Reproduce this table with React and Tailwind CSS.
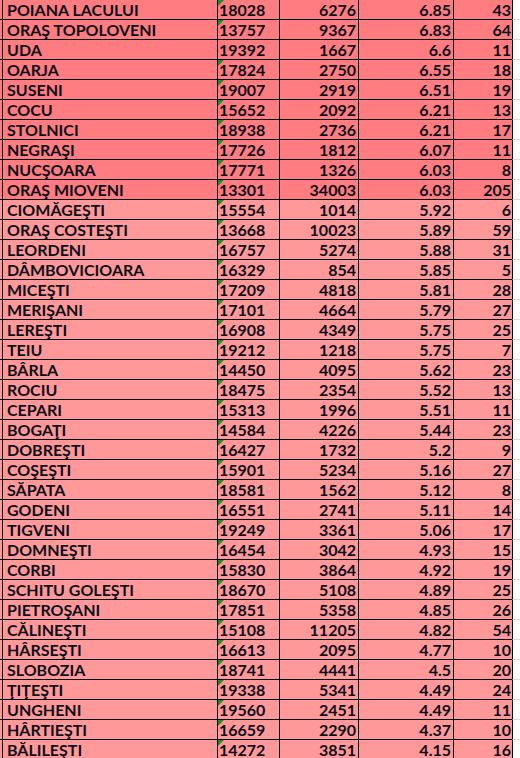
const rows = [
  ["POIANA LACULUI", "18028", "6276", "6.85", "43"],
  ["ORAŞ TOPOLOVENI", "13757", "9367", "6.83", "64"],
  ["UDA", "19392", "1667", "6.6", "11"],
  ["OARJA", "17824", "2750", "6.55", "18"],
  ["SUSENI", "19007", "2919", "6.51", "19"],
  ["COCU", "15652", "2092", "6.21", "13"],
  ["STOLNICI", "18938", "2736", "6.21", "17"],
  ["NEGRAŞI", "17726", "1812", "6.07", "11"],
  ["NUCŞOARA", "17771", "1326", "6.03", "8"],
  ["ORAŞ MIOVENI", "13301", "34003", "6.03", "205"],
  ["CIOMĂGEŞTI", "15554", "1014", "5.92", "6"],
  ["ORAŞ COSTEŞTI", "13668", "10023", "5.89", "59"],
  ["LEORDENI", "16757", "5274", "5.88", "31"],
  ["DÂMBOVICIOARA", "16329", "854", "5.85", "5"],
  ["MICEŞTI", "17209", "4818", "5.81", "28"],
  ["MERIŞANI", "17101", "4664", "5.79", "27"],
  ["LEREŞTI", "16908", "4349", "5.75", "25"],
  ["TEIU", "19212", "1218", "5.75", "7"],
  ["BÂRLA", "14450", "4095", "5.62", "23"],
  ["ROCIU", "18475", "2354", "5.52", "13"],
  ["CEPARI", "15313", "1996", "5.51", "11"],
  ["BOGAŢI", "14584", "4226", "5.44", "23"],
  ["DOBREŞTI", "16427", "1732", "5.2", "9"],
  ["COŞEŞTI", "15901", "5234", "5.16", "27"],
  ["SĂPATA", "18581", "1562", "5.12", "8"],
  ["GODENI", "16551", "2741", "5.11", "14"],
  ["TIGVENI", "19249", "3361", "5.06", "17"],
  ["DOMNEŞTI", "16454", "3042", "4.93", "15"],
  ["CORBI", "15830", "3864", "4.92", "19"],
  ["SCHITU GOLEŞTI", "18670", "5108", "4.89", "25"],
  ["PIETROŞANI", "17851", "5358", "4.85", "26"],
  ["CĂLINEŞTI", "15108", "11205", "4.82", "54"],
  ["HÂRSEŞTI", "16613", "2095", "4.77", "10"],
  ["SLOBOZIA", "18741", "4441", "4.5", "20"],
  ["ŢIŢEŞTI", "19338", "5341", "4.49", "24"],
  ["UNGHENI", "19560", "2451", "4.49", "11"],
  ["HÂRTIEŞTI", "16659", "2290", "4.37", "10"],
  ["BĂLILEŞTI", "14272", "3851", "4.15", "16"],
];

function Row({ r, i }) {
  const dark = i < 10;
  const bg = dark ? "bg-[#ff7c80]" : "bg-[#ff9999]";
  const cell = `h-full border-b border-black ${bg}`;
  return (
    <div className="flex h-[20px]">
      <div className={`${cell} w-[2px]`} />
      <div className={`${cell} border-l w-[215px] pl-[4px] truncate`}>{r[0]}</div>
      <div className={`${cell} border-l w-[62px] pl-[1px] relative`}>
        {i !== 2 && (
          <span className="absolute left-0 top-0 w-0 h-0 border-t-[6px] border-t-[#1f8f1f] border-r-[6px] border-r-transparent" />
        )}
        {r[1]}
      </div>
      <div className={`${cell} border-l w-[79px] pr-[2px] text-right`}>{r[2]}</div>
      <div className={`${cell} border-l w-[95px] pr-[2px] text-right`}>{r[3]}</div>
      <div className={`${cell} border-l w-[59px] pr-[1px] text-right`}>{r[4]}</div>
      <div className="h-full w-[8px] border-l border-l-black border-b border-b-[#d9d9d9] bg-white" />
    </div>
  );
}

export default function App() {
  return (
    <div
      className="w-[520px] h-[758px] overflow-hidden bg-white text-[16px] leading-[19px] font-bold text-[#0d0d1a]"
      style={{ fontFamily: "Lato, 'Liberation Sans', sans-serif" }}
    >
      {rows.map((r, i) => (
        <Row key={i} r={r} i={i} />
      ))}
    </div>
  );
}
